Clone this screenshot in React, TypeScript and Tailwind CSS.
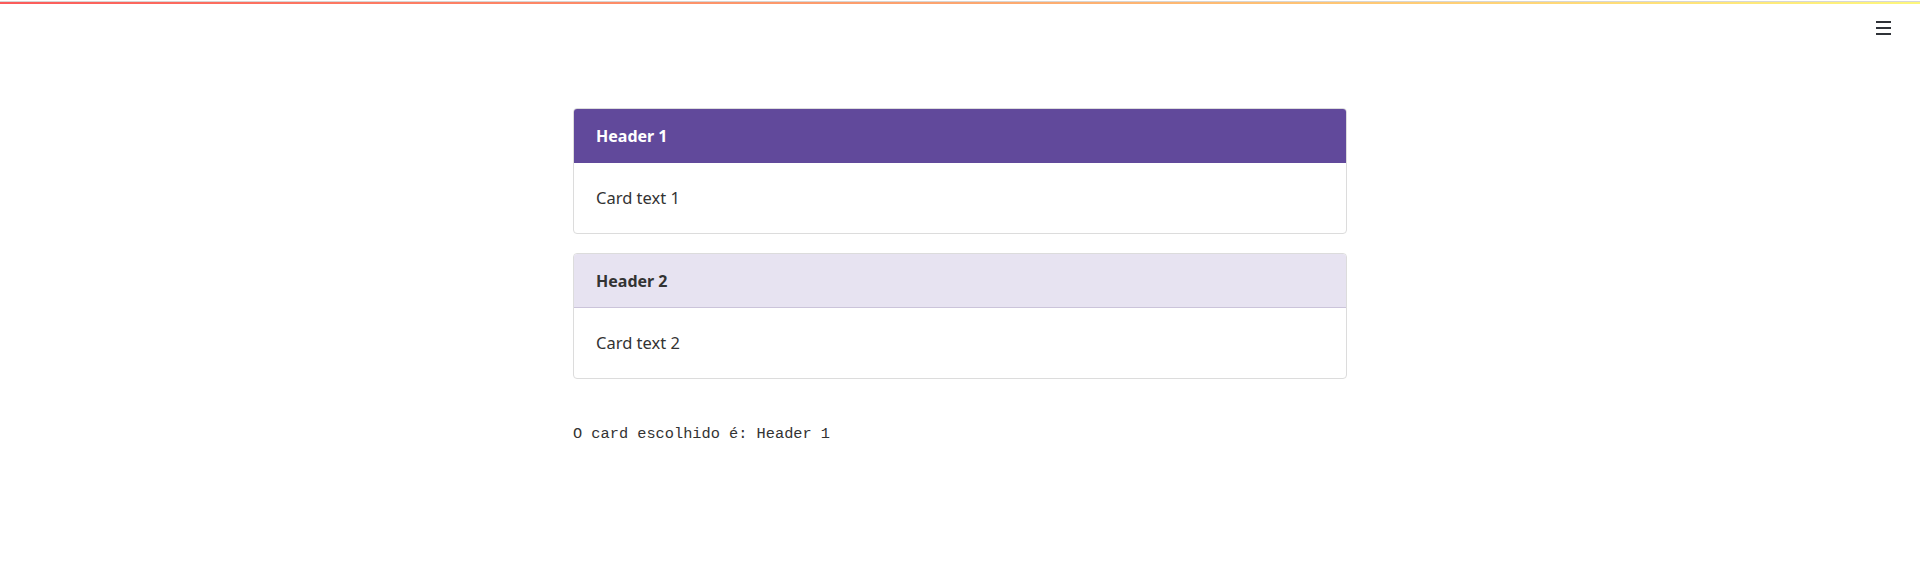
import React, { useState } from 'react';

const cards = [
    { id: 1, header: 'Header 1', text: 'Card text 1' },
    { id: 2, header: 'Header 2', text: 'Card text 2' },
];

const App: React.FC = () => {
    const [selected, setSelected] = useState('Header 1');

    return (
        <div className="min-h-[583px] bg-white" style={{ fontFamily: '"Noto Sans", sans-serif' }}>
            <div className="border-t border-[#d6d6d6] mt-px">
                <div className="h-[2px] bg-gradient-to-r from-[#fb5a5a] via-[#fca56f] to-[#fdf77c]" />
            </div>
            <div className="flex justify-end pr-[29px] pt-[17px]">
                <button className="flex flex-col gap-[4px] w-[15px]" aria-label="menu">
                    <span className="h-[2px] bg-[#2f3238]" />
                    <span className="h-[2px] bg-[#2f3238]" />
                    <span className="h-[2px] bg-[#2f3238]" />
                </button>
            </div>
            <div className="w-[774px] mx-auto mt-[73px] flex flex-col gap-[19px]">
                {cards.map((card) => {
                    const active = selected === card.header;
                    return (
                        <div
                            key={card.id}
                            onClick={() => setSelected(card.header)}
                            className="border border-[#dcdcdc] rounded-[4px] overflow-hidden cursor-pointer"
                        >
                            <div
                                className={
                                    active
                                        ? 'h-[54px] flex items-center px-[22px] bg-[#61499b] text-white font-bold text-[16px]'
                                        : 'h-[54px] flex items-center px-[22px] bg-[#e7e3f1] border-b border-[#cbc4da] text-[#333333] font-bold text-[16px]'
                                }
                            >
                                {card.header}
                            </div>
                            <div className="h-[70px] flex items-center px-[22px] text-[16.5px] text-[#333333]">
                                {card.text}
                            </div>
                        </div>
                    );
                })}
                <p
                    className="mt-[25px] text-[15.3px] text-[#333333]"
                    style={{ fontFamily: '"Liberation Mono", monospace' }}
                >
                    O card escolhido é: {selected}
                </p>
            </div>
        </div>
    );
};

export default App;
